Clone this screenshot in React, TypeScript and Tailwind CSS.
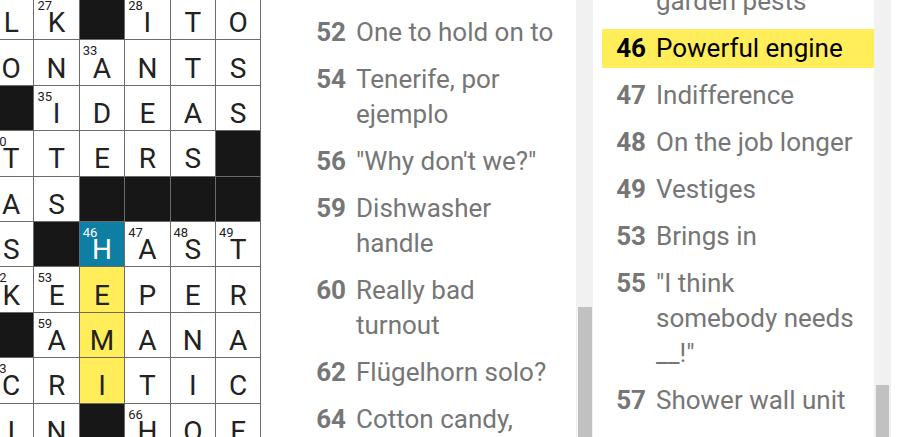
import React from "react";

type Cell = { l?: string; n?: number; b?: boolean; hl?: "cur" | "word" };

const B: Cell = { b: true };

const rows: Cell[][] = [
  [{ l: "L" }, { l: "K", n: 27 }, B, { l: "I", n: 28 }, { l: "T" }, { l: "O" }],
  [{ l: "O" }, { l: "N" }, { l: "A", n: 33 }, { l: "N" }, { l: "T" }, { l: "S" }],
  [B, { l: "I", n: 35 }, { l: "D" }, { l: "E" }, { l: "A" }, { l: "S" }],
  [{ l: "T", n: 40 }, { l: "T" }, { l: "E" }, { l: "R" }, { l: "S" }, B],
  [{ l: "A" }, { l: "S" }, B, B, B, B],
  [{ l: "S" }, B, { l: "H", n: 46, hl: "cur" }, { l: "A", n: 47 }, { l: "S", n: 48 }, { l: "T", n: 49 }],
  [{ l: "K", n: 52 }, { l: "E", n: 53 }, { l: "E", hl: "word" }, { l: "P" }, { l: "E" }, { l: "R" }],
  [B, { l: "A", n: 59 }, { l: "M", hl: "word" }, { l: "A" }, { l: "N" }, { l: "A" }],
  [{ l: "C", n: 63 }, { l: "R" }, { l: "I", hl: "word" }, { l: "T" }, { l: "I" }, { l: "C" }],
  [{ l: "I" }, { l: "N" }, B, { l: "H", n: 66 }, { l: "O" }, { l: "E" }],
];

const across = [
  { n: 52, t: "One to hold on to" },
  { n: 54, t: "Tenerife, por ejemplo" },
  { n: 56, t: "\"Why don't we?\"" },
  { n: 59, t: "Dishwasher handle" },
  { n: 60, t: "Really bad turnout" },
  { n: 62, t: "Flügelhorn solo?" },
  { n: 64, t: "Cotton candy, essentially" },
  { n: 65, t: "Gets ready" },
];

const down = [
  { n: 44, t: "Some destructive garden pests" },
  { n: 46, t: "Powerful engine", active: true },
  { n: 47, t: "Indifference" },
  { n: 48, t: "On the job longer" },
  { n: 49, t: "Vestiges" },
  { n: 53, t: "Brings in" },
  { n: 55, t: "\"I think somebody needs __!\"" },
  { n: 57, t: "Shower wall unit" },
  { n: 58, t: "Hot spot" },
];

function GridCell({ c }: { c: Cell }) {
  if (c.b) return <div className="bg-[#171717]" />;
  const bg =
    c.hl === "cur" ? "bg-[#0e7ea3] text-white" : c.hl === "word" ? "bg-[#ffed5a] text-[#222]" : "bg-white text-[#222]";
  return (
    <div className={`relative flex items-center justify-center ${bg}`}>
      {c.n && <span className="absolute left-[3px] top-[4px] text-[13px] leading-none">{c.n}</span>}
      <span className="pt-[12px] text-[28px] leading-[28px]">{c.l}</span>
    </div>
  );
}

function Clue({ n, t, active }: { n: number; t: string; active?: boolean }) {
  return (
    <li className={`flex gap-[10px] pl-[12px] pr-[16px] py-[2px] ${active ? "bg-[#ffed5a] text-black" : "text-[#767676]"}`}>
      <span className="w-[32px] shrink-0 text-right font-bold">{n}</span>
      <span>{t}</span>
    </li>
  );
}

export default function App() {
  return (
    <div
      className="flex h-[437px] w-[912px] overflow-hidden bg-white"
      style={{ fontFamily: "Roboto, 'Liberation Sans', sans-serif" }}
    >
      <div className="w-[262px] shrink-0 overflow-hidden">
        <div className="-ml-[11px] -mt-[5px] grid w-max grid-cols-[repeat(6,44.4px)] grid-rows-[repeat(10,44.4px)] gap-px bg-[#6b6b6b] pr-px">
          {rows.flat().map((c, i) => (
            <GridCell key={i} c={c} />
          ))}
        </div>
      </div>
      <div className="w-[314px] shrink-0 overflow-hidden pl-[40px] pt-[13px]">
        <ul className="space-y-[8px] text-[26px] leading-[35px]">
          {across.map((c) => (
            <Clue key={c.n} {...c} />
          ))}
        </ul>
      </div>
      <div className="flex w-[17px] shrink-0 flex-col bg-[#f1f1f1]">
        <div className="h-[307px]" />
        <div className="mx-[1.5px] flex-1 bg-[#c1c1c1]" />
      </div>
      <div className="w-[281px] shrink-0 overflow-hidden pl-[9px]">
        <ul className="-mt-[53px] space-y-[8px] text-[26px] leading-[35px]">
          {down.map((c) => (
            <Clue key={c.n} {...c} />
          ))}
        </ul>
      </div>
      <div className="flex w-[17px] shrink-0 flex-col bg-[#f1f1f1]">
        <div className="h-[385px]" />
        <div className="mx-[2px] flex-1 bg-[#c1c1c1]" />
      </div>
      <div className="flex-1" />
    </div>
  );
}
